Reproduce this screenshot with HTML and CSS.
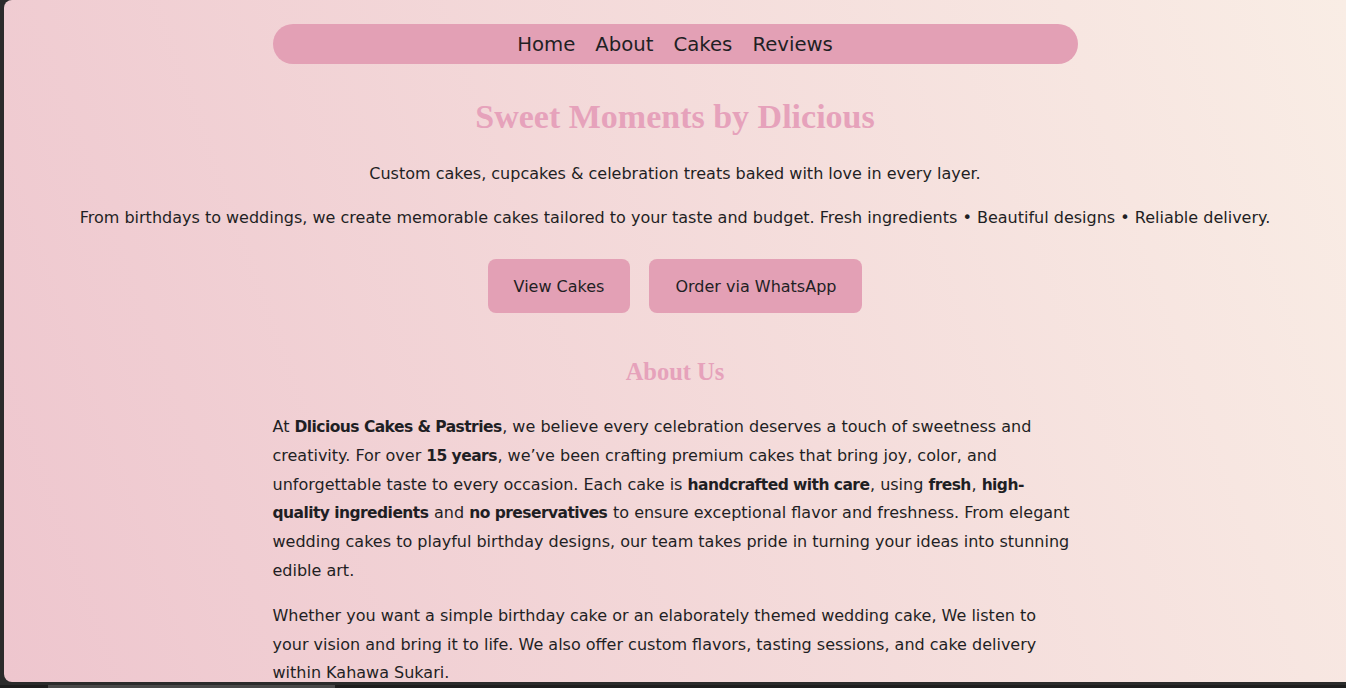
FILE: index.html
```html
<!DOCTYPE html>
<html lang="en">
<head>
<meta charset="utf-8">
<title>Dlicious Cakes &amp; Pastries</title>
<link rel="stylesheet" href="styles.css">
</head>
<body>
<div class="window">
  <nav class="nav">
    <a href="#">Home</a>
    <a href="#">About</a>
    <a href="#">Cakes</a>
    <a href="#">Reviews</a>
  </nav>
  <header class="hero">
    <h1 class="title">Sweet Moments by Dlicious</h1>
    <p class="tagline">Custom cakes, cupcakes &amp; celebration treats baked with love in every layer.</p>
    <p class="tagline">From birthdays to weddings, we create memorable cakes tailored to your taste and budget. Fresh ingredients • Beautiful designs • Reliable delivery.</p>
    <div class="actions">
      <a class="btn" href="#">View Cakes</a>
      <a class="btn" href="#">Order via WhatsApp</a>
    </div>
  </header>
  <section class="about">
    <h2 class="section-title">About Us</h2>
    <p>At <strong>Dlicious Cakes &amp; Pastries</strong>, we believe every celebration deserves a touch of sweetness and creativity. For over <strong>15 years</strong>, we’ve been crafting premium cakes that bring joy, color, and unforgettable taste to every occasion. Each cake is <strong>handcrafted with care</strong>, using <strong>fresh</strong>, <strong>high-quality ingredients</strong> and <strong>no preservatives</strong> to ensure exceptional flavor and freshness. From elegant wedding cakes to playful birthday designs, our team takes pride in turning your ideas into stunning edible art.</p>
    <p>Whether you want a simple birthday cake or an elaborately themed wedding cake, We listen to your vision and bring it to life. We also offer custom flavors, tasting sessions, and cake delivery within Kahawa Sukari.</p>
  </section>
</div>
<div class="bottombar">
  <span class="seg seg-a"></span>
  <span class="seg seg-b"></span>
  <span class="seg seg-c"></span>
</div>
</body>
</html>
```
FILE: styles.css
```css
html, body {
  margin: 0;
  padding: 0;
  height: 100%;
  overflow: hidden;
  background: #2b2b2b;
}
body {
  font-family: "DejaVu Sans", sans-serif;
  color: #1f1f24;
}
.window {
  margin-left: 4px;
  height: 682px;
  border-radius: 8px 0 0 8px;
  overflow: hidden;
  background: linear-gradient(70deg, #eec6ce 0%, #f9ede5 100%);
  padding-top: 24px;
  box-sizing: border-box;
}
.nav {
  width: 805px;
  height: 40px;
  margin: 0 auto;
  background: #e3a0b5;
  border-radius: 20px;
  display: flex;
  justify-content: center;
  align-items: center;
  gap: 20px;
}
.nav a {
  color: #1f1f24;
  text-decoration: none;
  font-size: 19.7px;
}
.hero {
  text-align: center;
}
.title {
  font-family: "Liberation Serif", serif;
  font-weight: 700;
  font-size: 34px;
  color: #e6a2bb;
  margin: 34px 0 26px;
}
.tagline {
  font-size: 16px;
  line-height: 24px;
  margin: 0 0 20px;
}
.actions {
  display: flex;
  justify-content: center;
  gap: 19px;
  margin-top: 29px;
}
.btn {
  background: #e3a0b5;
  color: #1f1f24;
  text-decoration: none;
  font-size: 16px;
  border-radius: 8px;
  height: 54px;
  padding: 0 26px;
  display: flex;
  align-items: center;
  box-sizing: border-box;
}
.about {
  width: 805px;
  margin: 0 auto;
}
.section-title {
  font-family: "Liberation Serif", serif;
  font-weight: 700;
  font-size: 24.5px;
  color: #e6a2bb;
  text-align: center;
  margin: 45px 0 27px;
}
.about p {
  font-size: 16px;
  line-height: 28.8px;
  margin: 0 5px 16px 0;
}
.about strong {
  font-weight: 700;
  font-size: 15.5px;
  line-height: 28.8px;
  letter-spacing: -0.55px;
  padding-right: 0.6px;
}
.bottombar {
  height: 6px;
  background: #2b2b2b;
  display: flex;
  align-items: flex-end;
}
.seg {
  height: 3px;
  background: #1e1e1e;
}
.seg-a {
  width: 48px;
}
.seg-b {
  width: 287px;
  background: #4a4a4a;
}
.seg-c {
  flex: 1;
}
```
